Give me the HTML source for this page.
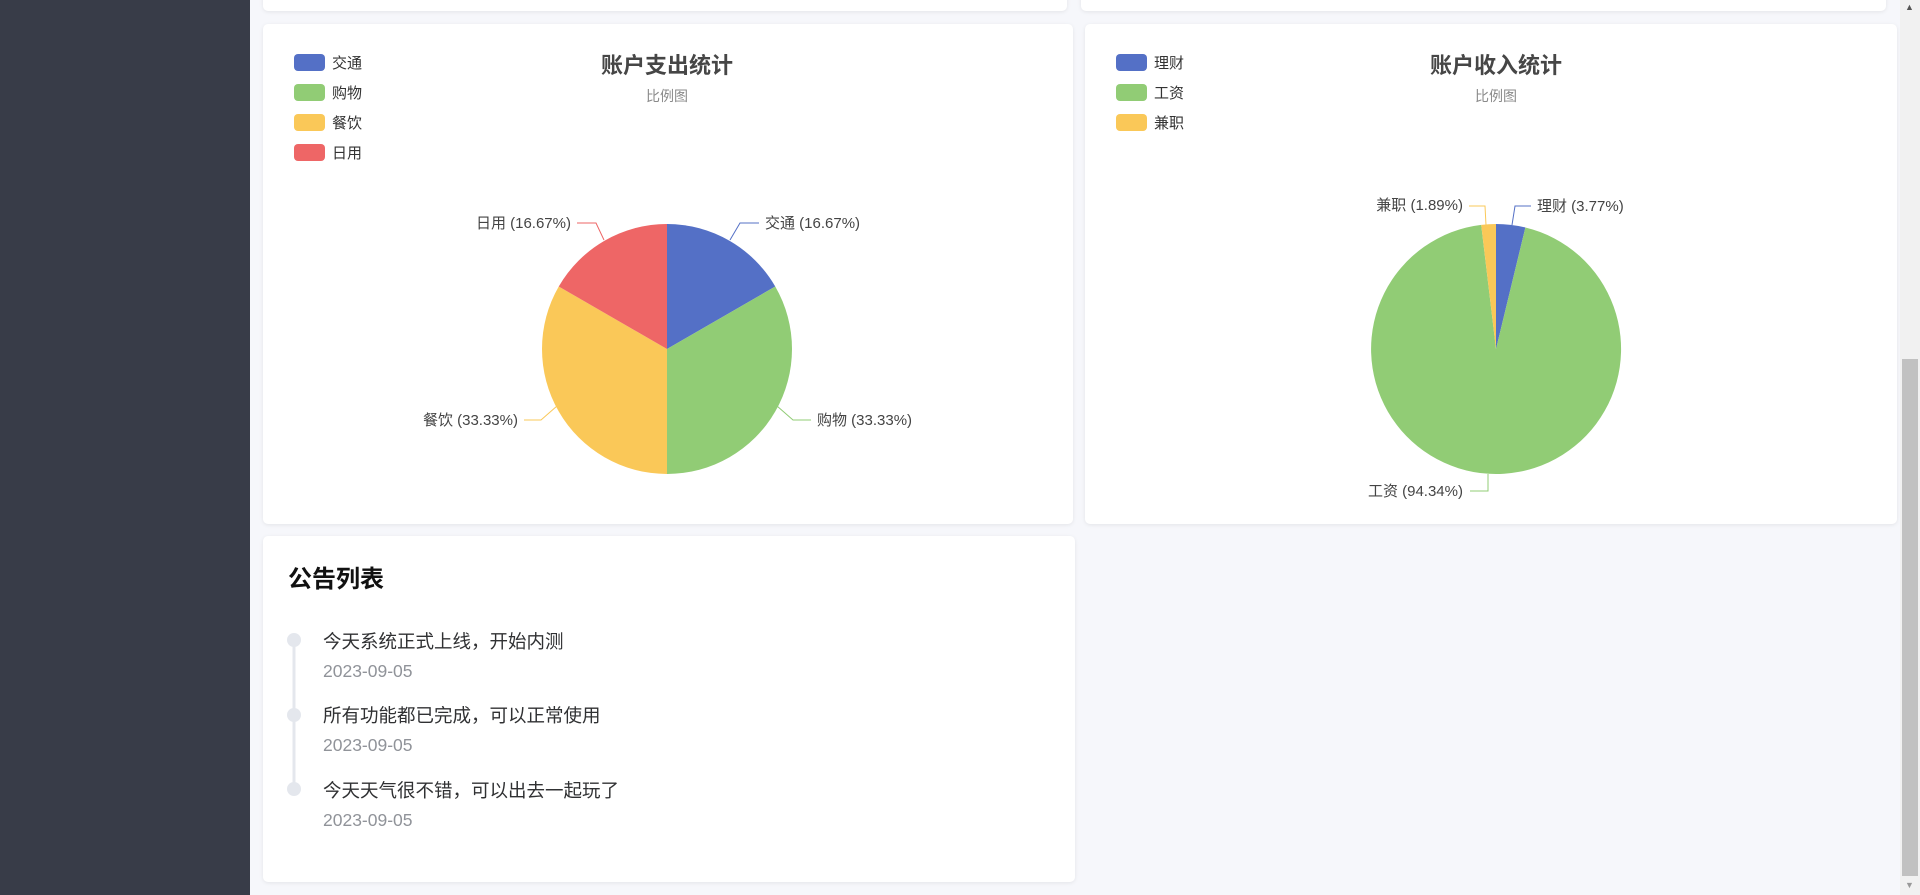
<!DOCTYPE html>
<html><head><meta charset="utf-8"><style>
*{margin:0;padding:0;box-sizing:border-box}
body{width:1920px;height:895px;overflow:hidden;background:#f6f7fb;font-family:"Liberation Sans","Noto Sans CJK SC",sans-serif;position:relative}
.side{position:absolute;left:0;top:0;width:250px;height:895px;background:#383c48}
.card{position:absolute;background:#fff;border-radius:5px;box-shadow:0 1px 4px rgba(0,0,0,0.08)}
.sb{position:absolute;left:1900px;top:0;width:20px;height:895px;background:#f1f1f1}
.thumb{position:absolute;left:1902px;top:359px;width:16px;height:517px;background:#c1c1c1}
.t{position:absolute;white-space:nowrap}
</style></head><body>
<div class="side"></div>
<div class="card" style="left:263px;top:-10px;width:804px;height:21px"></div>
<div class="card" style="left:1081px;top:-10px;width:805px;height:21px"></div>
<div class="card" style="left:263px;top:24px;width:810px;height:500px"></div>
<div class="card" style="left:1085px;top:24px;width:812px;height:500px"></div>
<div class="card" style="left:263px;top:536px;width:812px;height:346px"></div>
<svg style="position:absolute;left:0;top:0" width="1900" height="895" font-family="Liberation Sans, Noto Sans CJK SC, sans-serif">
<g font-size="15" fill="#333">
<rect x="294" y="54" width="31" height="17" rx="4" fill="#5470c6"/><text x="332" y="68">交通</text>
<rect x="294" y="84" width="31" height="17" rx="4" fill="#91cc75"/><text x="332" y="98">购物</text>
<rect x="294" y="114" width="31" height="17" rx="4" fill="#fac858"/><text x="332" y="128">餐饮</text>
<rect x="294" y="144" width="31" height="17" rx="4" fill="#ee6666"/><text x="332" y="158">日用</text>
<rect x="1116" y="54" width="31" height="17" rx="4" fill="#5470c6"/><text x="1154" y="68">理财</text>
<rect x="1116" y="84" width="31" height="17" rx="4" fill="#91cc75"/><text x="1154" y="98">工资</text>
<rect x="1116" y="114" width="31" height="17" rx="4" fill="#fac858"/><text x="1154" y="128">兼职</text>
</g>
<text x="667" y="73" font-size="22" font-weight="bold" fill="#464646" text-anchor="middle">账户支出统计</text>
<text x="667" y="101" font-size="14" fill="#8a8a8a" text-anchor="middle">比例图</text>
<text x="1496" y="73" font-size="22" font-weight="bold" fill="#464646" text-anchor="middle">账户收入统计</text>
<text x="1496" y="101" font-size="14" fill="#8a8a8a" text-anchor="middle">比例图</text>
<path d="M667 349 L667 224 A125 125 0 0 1 775.25 286.5 Z" fill="#5470c6"/>
<path d="M667 349 L775.25 286.5 A125 125 0 0 1 667 474 Z" fill="#91cc75"/>
<path d="M667 349 L667 474 A125 125 0 0 1 558.75 286.5 Z" fill="#fac858"/>
<path d="M667 349 L558.75 286.5 A125 125 0 0 1 667 224 Z" fill="#ee6666"/>
<g fill="none" stroke-width="1">
<polyline points="730,240 740,223 759,223" stroke="#5470c6"/>
<polyline points="777,406 793,420 811,420" stroke="#91cc75"/>
<polyline points="557,406 541,420 524,420" stroke="#fac858"/>
<polyline points="604,240 596,223 577,223" stroke="#ee6666"/>
<polyline points="1512,225 1515,206 1531,206" stroke="#5470c6"/>
<polyline points="1486,225 1485,206 1469,206" stroke="#fac858"/>
<polyline points="1488,474 1488,491 1470,491" stroke="#91cc75"/>
</g>
<g font-size="15" fill="#444">
<text x="765" y="228">交通 (16.67%)</text>
<text x="817" y="425">购物 (33.33%)</text>
<text x="518" y="425" text-anchor="end">餐饮 (33.33%)</text>
<text x="571" y="228" text-anchor="end">日用 (16.67%)</text>
<text x="1537" y="211">理财 (3.77%)</text>
<text x="1463" y="210" text-anchor="end">兼职 (1.89%)</text>
<text x="1463" y="496" text-anchor="end">工资 (94.34%)</text>
</g>
<path d="M1496 349 L1496 224 A125 125 0 0 1 1525.4 227.5 Z" fill="#5470c6"/>
<path d="M1496 349 L1525.4 227.5 A125 125 0 1 1 1481.2 224.9 Z" fill="#91cc75"/>
<path d="M1496 349 L1481.2 224.9 A125 125 0 0 1 1496 224 Z" fill="#fac858"/>
<text x="288" y="587" font-size="24" font-weight="bold" fill="#111">公告列表</text>
<line x1="294" y1="640" x2="294" y2="789" stroke="#e4e7ed" stroke-width="3"/>
<circle cx="294" cy="640" r="7" fill="#e4e7ed"/>
<circle cx="294" cy="715" r="7" fill="#e4e7ed"/>
<circle cx="294" cy="789" r="7" fill="#e4e7ed"/>
<g font-size="18.5" fill="#303133">
<text x="323" y="648">今天系统正式上线，开始内测</text>
<text x="323" y="722">所有功能都已完成，可以正常使用</text>
<text x="323" y="797">今天天气很不错，可以出去一起玩了</text>
</g>
<g font-size="17.5" fill="#909399">
<text x="323" y="677">2023-09-05</text>
<text x="323" y="751">2023-09-05</text>
<text x="323" y="826">2023-09-05</text>
</g>
</svg>
<div class="sb"></div><div class="thumb"></div>
<div class="t" style="left:1905px;top:2px;font-size:9px;color:#555">▲</div>
<div class="t" style="left:1905px;top:880px;font-size:9px;color:#999">▼</div>
</body></html>
